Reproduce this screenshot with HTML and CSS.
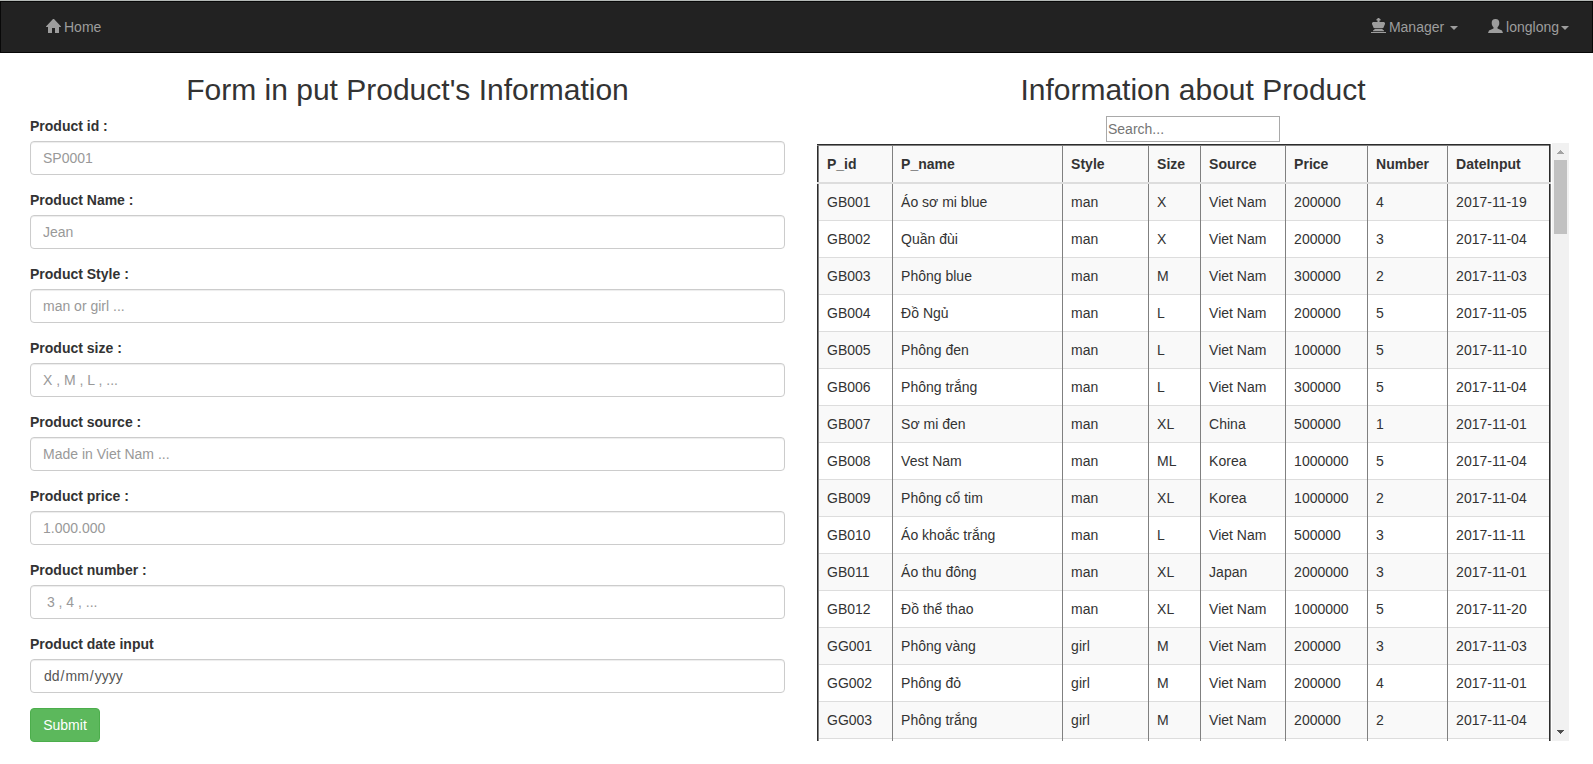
FILE: index.html
```html
<!DOCTYPE html>
<html lang="en">
<head>
<meta charset="utf-8">
<title>Product</title>
<link rel="stylesheet" href="styles.css">
</head>
<body>
<nav class="navbar">
  <a class="nav-link"><svg class="glyph" viewBox="0 0 15 15"><path d="M7 0H8L15 7.500V8H13V14H9V9H6V14H2V8H0V7.500Z"/></svg>Home</a>
  <div class="nav-right">
    <a class="nav-link"><svg class="glyph" viewBox="0 0 15 15"><path d="M6.500-1H8.500V0H9.500V1.500H8.500V3H13L14 4V5L12.300 9H2.700L1 5V4L2 3H6.500V1.500H5.500V0H6.500ZM3.500 9.700H11.500V10.500L13 11.500V12.300H2V11.500L3.500 10.500ZM0 13H15V14H0Z"/></svg>Manager <b class="caret"></b></a>
    <a class="nav-link"><svg class="glyph" viewBox="0 0 15 15"><path d="M7.500 0C10.200 0 11.300 1.500 11.300 4 11.300 6 10.500 7.500 9.500 8.300V9.500L14 11.500 15 14H0L1 11.500 5.500 9.500V8.300C4.500 7.500 3.700 6 3.700 4 3.700 1.500 4.800 0 7.500 0Z"/></svg>longlong<b class="caret"></b></a>
  </div>
</nav>
<main class="columns">
  <section class="form-col">
    <h2>Form in put Product's Information</h2>
    <form>
      <div class="group"><label>Product id :</label><input class="control" placeholder="SP0001"></div>
      <div class="group"><label>Product Name :</label><input class="control" placeholder="Jean"></div>
      <div class="group"><label>Product Style :</label><input class="control" placeholder="man or girl ..."></div>
      <div class="group"><label>Product size :</label><input class="control" placeholder="X , M , L , ..."></div>
      <div class="group"><label>Product source :</label><input class="control" placeholder="Made in Viet Nam ..."></div>
      <div class="group"><label>Product price :</label><input class="control" placeholder="1.000.000"></div>
      <div class="group"><label>Product number :</label><input class="control" placeholder=" 3 , 4 , ..."></div>
      <div class="group"><label>Product date input</label><div class="control date"><span>dd</span>/<span>mm</span>/<span>yyyy</span></div></div>
      <button class="submit" type="button">Submit</button>
    </form>
  </section>
  <section class="table-col">
    <h2>Information about Product</h2>
    <input class="search" placeholder="Search...">
    <div class="scroller">
      <div class="viewport">
        <table class="products">
          <colgroup><col class="c-id"><col class="c-name"><col class="c-style"><col class="c-size"><col class="c-source"><col class="c-price"><col class="c-number"><col></colgroup>
          <thead><tr><th>P_id</th><th>P_name</th><th>Style</th><th>Size</th><th>Source</th><th>Price</th><th>Number</th><th>DateInput</th></tr></thead>
          <tbody>
            <tr><td>GB001</td><td>Áo sơ mi blue</td><td>man</td><td>X</td><td>Viet Nam</td><td>200000</td><td>4</td><td>2017-11-19</td></tr>
            <tr><td>GB002</td><td>Quần đùi</td><td>man</td><td>X</td><td>Viet Nam</td><td>200000</td><td>3</td><td>2017-11-04</td></tr>
            <tr><td>GB003</td><td>Phông blue</td><td>man</td><td>M</td><td>Viet Nam</td><td>300000</td><td>2</td><td>2017-11-03</td></tr>
            <tr><td>GB004</td><td>Đồ Ngủ</td><td>man</td><td>L</td><td>Viet Nam</td><td>200000</td><td>5</td><td>2017-11-05</td></tr>
            <tr><td>GB005</td><td>Phông đen</td><td>man</td><td>L</td><td>Viet Nam</td><td>100000</td><td>5</td><td>2017-11-10</td></tr>
            <tr><td>GB006</td><td>Phông trắng</td><td>man</td><td>L</td><td>Viet Nam</td><td>300000</td><td>5</td><td>2017-11-04</td></tr>
            <tr><td>GB007</td><td>Sơ mi đen</td><td>man</td><td>XL</td><td>China</td><td>500000</td><td>1</td><td>2017-11-01</td></tr>
            <tr><td>GB008</td><td>Vest Nam</td><td>man</td><td>ML</td><td>Korea</td><td>1000000</td><td>5</td><td>2017-11-04</td></tr>
            <tr><td>GB009</td><td>Phông cổ tim</td><td>man</td><td>XL</td><td>Korea</td><td>1000000</td><td>2</td><td>2017-11-04</td></tr>
            <tr><td>GB010</td><td>Áo khoắc trắng</td><td>man</td><td>L</td><td>Viet Nam</td><td>500000</td><td>3</td><td>2017-11-11</td></tr>
            <tr><td>GB011</td><td>Áo thu đông</td><td>man</td><td>XL</td><td>Japan</td><td>2000000</td><td>3</td><td>2017-11-01</td></tr>
            <tr><td>GB012</td><td>Đồ thể thao</td><td>man</td><td>XL</td><td>Viet Nam</td><td>1000000</td><td>5</td><td>2017-11-20</td></tr>
            <tr><td>GG001</td><td>Phông vàng</td><td>girl</td><td>M</td><td>Viet Nam</td><td>200000</td><td>3</td><td>2017-11-03</td></tr>
            <tr><td>GG002</td><td>Phông đỏ</td><td>girl</td><td>M</td><td>Viet Nam</td><td>200000</td><td>4</td><td>2017-11-01</td></tr>
            <tr><td>GG003</td><td>Phông trắng</td><td>girl</td><td>M</td><td>Viet Nam</td><td>200000</td><td>2</td><td>2017-11-04</td></tr>
            <tr><td>&nbsp;</td><td></td><td></td><td></td><td></td><td></td><td></td><td></td></tr>
          </tbody>
        </table>
      </div>
      <div class="scrollbar">
        <svg class="arrow up" viewBox="0 0 7 4" shape-rendering="crispEdges"><path d="M3 0H4V1H5V2H6V3H7V4H0V3H1V2H2V1H3Z"/></svg>
        <div class="thumb"></div>
        <svg class="arrow down" viewBox="0 0 7 4" shape-rendering="crispEdges"><path d="M0 0H7V1H6V2H5V3H4V4H3V3H2V2H1V1H0Z"/></svg>
      </div>
    </div>
  </section>
</main>
</body>
</html>
```
FILE: styles.css
```css
* { box-sizing: border-box; }
body {
  margin: 0;
  height: 764px;
  overflow: hidden;
  border-top: 1px solid #b4b9b6;
  background: #fff;
  color: #333;
  font: 14px/20px "Liberation Sans", Arial, sans-serif;
}
input, button { font-family: inherit; font-size: 14px; }

.navbar {
  display: flex;
  justify-content: space-between;
  height: 52px;
  margin-bottom: 20px;
  padding: 0 8px 0 30px;
  background: #222;
  border: 1px solid #080808;
}
.nav-right { display: flex; }
.nav-link { display: flex; align-items: flex-start; padding: 15px; color: #9d9d9d; white-space: pre; }
.glyph { width: 15px; height: 15px; margin: 2px 3px 0 0; fill: currentColor; overflow: visible; }
.caret { margin: 9px 0 0 2px; border: 4px solid transparent; border-top-color: currentColor; border-bottom: 0; }

.columns { display: flex; gap: 32px; padding: 0 24px 0 30px; }
.form-col { width: 755px; }
.table-col { width: 752px; display: flex; flex-direction: column; align-items: center; }
h2 { margin: 0 0 10px; font-size: 30px; font-weight: 500; line-height: 33px; text-align: center; }

.group { margin-bottom: 15px; }
label { display: block; margin-bottom: 5px; font-weight: 700; }
.control {
  display: block;
  width: 100%;
  height: 34px;
  padding: 6px 12px;
  border: 1px solid #ccc;
  border-radius: 4px;
  background: #fff;
  box-shadow: inset 0 1px 1px rgba(0, 0, 0, .075);
  color: #555;
}
.control::placeholder { color: #999; }
.date span { padding: 0 1px; }
.submit {
  display: block;
  width: 70px;
  height: 34px;
  padding: 0;
  border: 1px solid #4cae4c;
  border-radius: 4px;
  background: #5cb85c;
  color: #fff;
}

.search { width: 174px; height: 26px; margin-bottom: 1px; padding: 1px; border: 1px solid #a9a9a9; }
.search::placeholder { color: #757575; }
.scroller { display: flex; justify-content: space-between; width: 100%; height: 598px; }
.viewport { height: 598px; padding-top: 1px; overflow: hidden; }

.products { width: 734px; table-layout: fixed; border-collapse: collapse; border: 2px groove #808080; }
.products th, .products td { padding: 8px 8px 8px 8.6px; text-align: left; border-left: 1px solid #808080; }
.products th { border-bottom: 2px solid #ddd; background: #f9f9f9; }
.products td { border-top: 1px solid #ddd; }
.products th:first-child, .products td:first-child { padding-left: 8px; border-left: 0; }
.products tbody tr:nth-child(odd) { background: #f9f9f9; }
.c-id { width: 74px; }
.c-name { width: 170px; }
.c-style { width: 86px; }
.c-size { width: 52px; }
.c-source { width: 85px; }
.c-price { width: 82px; }
.c-number { width: 80px; }

.scrollbar { display: flex; flex-direction: column; align-items: center; width: 17px; padding: 7px 0; background: #f1f1f1; }
.arrow { width: 7px; height: 4px; }
.up { fill: #a3a3a3; }
.down { margin-top: auto; fill: #505050; }
.thumb { width: 13px; height: 74px; margin-top: 6px; background: #c1c1c1; }
```
